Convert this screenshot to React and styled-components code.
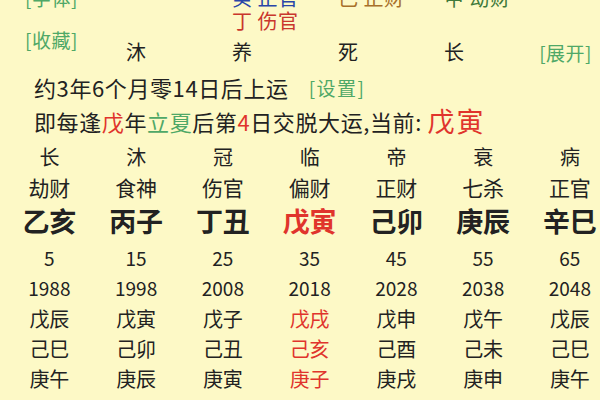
import React from "react";
import styled, { createGlobalStyle } from "styled-components";

const GlobalStyle = createGlobalStyle`
  html, body {
    margin: 0;
    padding: 0;
    background: #fdf9c6;
    overflow: hidden;
  }
  body {
    width: 600px;
    height: 400px;
    font-family: "Noto Sans CJK SC", "Noto Sans", sans-serif;
    color: #222;
  }
`;

const Page = styled.div`
  width: 600px;
  height: 400px;
  overflow: hidden;
  background: #fdf9c6;
`;

const Top = styled.div`
  display: grid;
  grid-template-columns: 83px repeat(4, 106px) 1fr;
  grid-template-rows: 46px 26px;
  row-gap: 7px;
  margin-top: -14px;
`;

const SideLinks = styled.div`
  grid-column: 1;
  grid-row: 1 / 3;
  display: flex;
  flex-direction: column;
  gap: 19px;
  padding-left: 25px;
`;

const LinkText = styled.span`
  color: #4fa867;
  font-size: 19px;
  line-height: 23px;
  letter-spacing: 0.5px;
  white-space: nowrap;
`;

const Stems = styled.div`
  grid-row: 1;
  grid-column: ${({ $col }) => $col};
  display: flex;
  flex-direction: column;
  padding-left: 43px;
`;

const StemLine = styled.div`
  color: ${({ $color }) => $color};
  font-size: 20px;
  line-height: 23px;
  letter-spacing: 0.5px;
  white-space: nowrap;
`;

const Phase = styled.div`
  grid-row: 2;
  grid-column: ${({ $col }) => $col};
  text-align: center;
  font-size: 20px;
  line-height: 26px;
`;

const Expand = styled.div`
  grid-row: 2;
  grid-column: 6;
  justify-self: end;
  padding-right: 8px;
  display: flex;
  align-items: center;
`;

const Info = styled.div`
  display: flex;
  flex-direction: column;
  padding-left: 34px;
  margin-top: 5px;
`;

const InfoLine = styled.div`
  display: flex;
  align-items: center;
  font-size: 22px;
  letter-spacing: 0.6px;
  line-height: 34px;
  white-space: nowrap;
`;

const Setting = styled(LinkText)`
  font-size: 19px;
  letter-spacing: 1.5px;
  margin-left: 20px;
`;

const Hl = styled.span`
  color: ${({ $color }) => $color};
  font-size: ${({ $size }) => ($size ? `${$size}px` : "inherit")};
  letter-spacing: ${({ $size }) => ($size ? "2px" : "inherit")};
`;

const Luck = styled.div`
  display: grid;
  grid-template-columns: repeat(7, 86.75px);
  margin-left: 6px;
  margin-top: 3px;
`;

const Cell = styled.div`
  text-align: center;
  white-space: nowrap;
  height: ${({ $h }) => $h}px;
  line-height: ${({ $h }) => $h}px;
  font-size: ${({ $size }) => $size}px;
  font-weight: ${({ $bold }) => ($bold ? 700 : 400)};
  color: ${({ $red }) => ($red ? "#e0342c" : "#222")};
`;

const PillarCell = styled(Cell)`
  line-height: 36px;
  padding-bottom: 4px;
  height: 36px;
`;

const current = 3;

const rows = [
  { key: "phase", h: 31, size: 20, items: ["长", "沐", "冠", "临", "帝", "衰", "病"] },
  { key: "god", h: 31, size: 21, items: ["劫财", "食神", "伤官", "偏财", "正财", "七杀", "正官"] },
  { key: "pillar", pillar: true, size: 27, red: true, items: ["乙亥", "丙子", "丁丑", "戊寅", "己卯", "庚辰", "辛巳"] },
  { key: "age", h: 30, size: 19, items: ["5", "15", "25", "35", "45", "55", "65"] },
  { key: "year", h: 30, size: 19, items: ["1988", "1998", "2008", "2018", "2028", "2038", "2048"] },
  { key: "ln1", h: 31, size: 20, red: true, items: ["戊辰", "戊寅", "戊子", "戊戌", "戊申", "戊午", "戊辰"] },
  { key: "ln2", h: 30, size: 20, red: true, items: ["己巳", "己卯", "己丑", "己亥", "己酉", "己未", "己巳"] },
  { key: "ln3", h: 30, size: 20, red: true, items: ["庚午", "庚辰", "庚寅", "庚子", "庚戌", "庚申", "庚午"] },
];

const pillars = [
  { phase: "沐", stems: [] },
  { phase: "养", stems: [{ text: "癸 正官", color: "#2a46a8" }, { text: "丁 伤官", color: "#c9372d" }] },
  { phase: "死", stems: [{ text: "己 正财", color: "#a8702a" }] },
  { phase: "长", stems: [{ text: "甲 劫财", color: "#3f7a3a" }] },
];

const App = () => (
  <Page>
    <GlobalStyle />
    <Top>
      <SideLinks>
        <LinkText>[字体]</LinkText>
        <LinkText>[收藏]</LinkText>
      </SideLinks>
      {pillars.map((p, i) => (
        <React.Fragment key={i}>
          <Stems $col={i + 2}>
            {p.stems.map((s) => (
              <StemLine key={s.text} $color={s.color}>
                {s.text}
              </StemLine>
            ))}
          </Stems>
          <Phase $col={i + 2}>{p.phase}</Phase>
        </React.Fragment>
      ))}
      <Expand>
        <LinkText>[展开]</LinkText>
      </Expand>
    </Top>

    <Info>
      <InfoLine>
        约3年6个月零14日后上运
        <Setting>[设置]</Setting>
      </InfoLine>
      <InfoLine>
        即每逢<Hl $color="#e0342c">戊</Hl>年<Hl $color="#4fa867">立夏</Hl>后第
        <Hl $color="#e0342c">4</Hl>日交脱大运,当前:&nbsp;
        <Hl $color="#e0342c" $size={27}>戊寅</Hl>
      </InfoLine>
    </Info>

    <Luck>
      {rows.map((row) =>
        row.items.map((text, i) => {
          const red = row.red && i === current;
          return row.pillar ? (
            <PillarCell key={row.key + i} $size={row.size} $bold $red={red}>
              {text}
            </PillarCell>
          ) : (
            <Cell key={row.key + i} $h={row.h} $size={row.size} $red={red}>
              {text}
            </Cell>
          );
        })
      )}
    </Luck>
  </Page>
);

export default App;
